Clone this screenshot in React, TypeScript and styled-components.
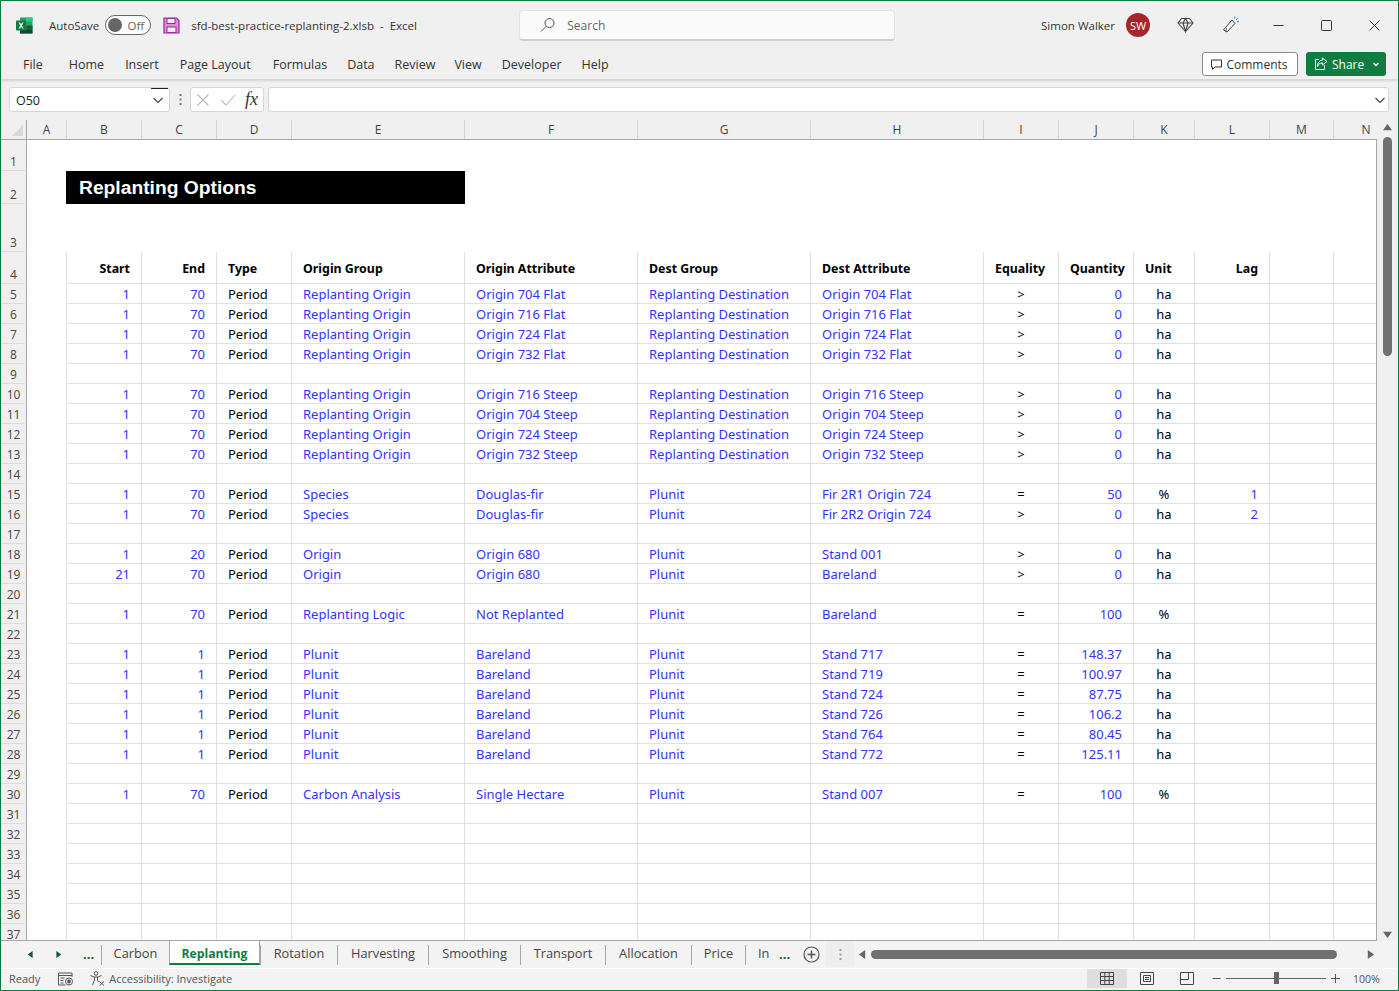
import React from "react";
import styled, { createGlobalStyle } from "styled-components";

const UI_FONT = `"Open Sans", "Noto Sans", sans-serif`;
const CELL_FONT = `"Noto Sans", "Open Sans", sans-serif`;

const GlobalStyle = createGlobalStyle`
    html, body {
        margin: 0;
        padding: 0;
        background: #fff;
    }
    * {
        box-sizing: border-box;
    }
`;

const Window = styled.div`
    width: 1399px;
    height: 991px;
    display: flex;
    flex-direction: column;
    overflow: hidden;
    border: 1px solid #107c41;
    background: #f0f0f0;
    font-family: ${UI_FONT};
    color: #333;
`;

const TitleBar = styled.div`
    height: 45px;
    flex: none;
    padding-top: 3px;
    display: flex;
    align-items: center;
    font-size: 11.5px;
`;

const AppLogo = styled.div`
    width: 48px;
    padding-left: 15px;
    display: flex;
`;

const Toggle = styled.div`
    width: 46px;
    height: 20px;
    margin: 0 12px 0 6px;
    padding: 0 6px 0 2px;
    display: flex;
    align-items: center;
    justify-content: space-between;
    border: 1px solid #666;
    border-radius: 10px;
    background: #fff;
    color: #666;
    font-size: 11.5px;
`;

const ToggleKnob = styled.span`
    width: 14px;
    height: 14px;
    border-radius: 50%;
    background: #666;
`;

const FileName = styled.span`
    width: 229px;
    margin-left: 11px;
    white-space: pre;
`;

const SearchBox = styled.div`
    width: 376px;
    height: 31px;
    margin-left: 99px;
    padding: 1px 0 0 19px;
    display: flex;
    align-items: center;
    gap: 11px;
    border: 1px solid #e4e4e4;
    border-bottom: 2px solid #cfcfcf;
    border-radius: 4px;
    background: #fafafa;
    color: #666;
    font-size: 12px;
`;

const UserArea = styled.div`
    margin-left: auto;
    display: flex;
    align-items: center;
`;

const Avatar = styled.div`
    width: 24px;
    height: 24px;
    margin: 0 25px 0 11px;
    display: flex;
    align-items: center;
    justify-content: center;
    border-radius: 50%;
    background: #a4262c;
    color: #fff;
    font-size: 11px;
`;

const IconSlot = styled.div<{ $w: number; $ml?: number }>`
    width: ${(p) => p.$w}px;
    margin-left: ${(p) => p.$ml ?? 0}px;
    display: flex;
    justify-content: center;
`;

const RibbonTabs = styled.div`
    height: 34px;
    flex: none;
    padding: 3px 12px 0 22px;
    display: flex;
    align-items: center;
    font-size: 12.5px;
    border-bottom: 1px solid #d8d8d8;
    box-shadow: 0 1px 2px rgba(0, 0, 0, 0.12);
    position: relative;
`;

const RibbonTab = styled.span<{ $gap: number }>`
    margin-right: ${(p) => p.$gap}px;
    padding-top: 1px;
    color: #333;
`;

const RibbonActions = styled.div`
    margin-left: auto;
    display: flex;
    gap: 8px;
    align-items: center;
    font-size: 12px;
`;

const CommentsButton = styled.div`
    width: 96px;
    height: 24px;
    padding-right: 2px;
    display: flex;
    align-items: center;
    justify-content: center;
    gap: 3px;
    border: 1px solid #8a8a8a;
    border-radius: 3px;
    background: #fff;
`;

const ShareButton = styled.div`
    width: 80px;
    height: 24px;
    padding: 0 4px 0 8px;
    display: flex;
    align-items: center;
    gap: 4px;
    border-radius: 3px;
    background: #107c41;
    color: #fff;
`;

const ShareCaret = styled.span`
    margin-left: auto;
    display: flex;
`;

const FormulaBar = styled.div`
    height: 40px;
    flex: none;
    padding: 7px 9px 8px 8px;
    display: flex;
    align-items: stretch;
`;

const InputBox = styled.div`
    display: flex;
    align-items: center;
    border: 1px solid #d6d6d6;
    border-radius: 3px;
    background: #fff;
`;

const NameBox = styled(InputBox)`
    width: 161px;
    padding: 1px 5px 0 6px;
    justify-content: space-between;
    font-size: 12.5px;
    color: #222;
    position: relative;
    &::after {
        content: "";
        position: absolute;
        top: 0;
        right: 1px;
        width: 17px;
        height: 1px;
        background: #222;
    }
`;

const BarDots = styled.div`
    width: 20px;
    display: flex;
    justify-content: center;
    align-items: center;
`;

const FormulaButtons = styled(InputBox)`
    width: 74px;
    margin-right: 4px;
    padding: 0 5px 0 5px;
    justify-content: space-between;
`;

const FxLabel = styled.span`
    font-family: "Liberation Serif", serif;
    font-style: italic;
    font-size: 18px;
    color: #333;
`;

const FormulaInput = styled(InputBox)`
    flex: 1;
    justify-content: flex-end;
    padding-right: 2px;
`;

const HeaderStrip = styled.div`
    height: 20px;
    flex: none;
    display: flex;
    background: #f0f0f0;
    font-size: 12px;
    color: #444;
    border-bottom: 1px solid #a6a6a6;
    margin-right: 21px;
`;

const Corner = styled.div`
    width: 26px;
    flex: none;
    display: flex;
    align-items: flex-end;
    justify-content: flex-end;
    padding: 0 3px 3px 0;
    border-right: 1px solid #a6a6a6;
`;

const ColumnLabel = styled.div<{ $w: number }>`
    width: ${(p) => p.$w}px;
    flex: none;
    display: flex;
    align-items: center;
    justify-content: center;
    border-right: 1px solid #d4d4d4;
    &:last-child {
        border-right: none;
    }
`;

const SheetArea = styled.div`
    flex: 1;
    min-height: 0;
    display: flex;
`;

const Grid = styled.div`
    flex: 1;
    overflow: hidden;
    background: #fff;
    border-right: 1px solid #a6a6a6;
    border-bottom: 1px solid #a6a6a6;
`;

const Row = styled.div<{ $h: number }>`
    height: ${(p) => p.$h}px;
    display: flex;
`;

const RowLabel = styled.div`
    width: 26px;
    flex: none;
    display: flex;
    align-items: flex-end;
    justify-content: center;
    background: #f0f0f0;
    border-right: 1px solid #a6a6a6;
    border-bottom: 1px solid #dcdcdc;
    color: #444;
    font-family: ${UI_FONT};
    font-size: 12px;
`;

const BlankA = styled.div<{ $line?: boolean }>`
    width: 40px;
    flex: none;
    border-right: ${(p) => (p.$line ? "1px solid #e0e0e0" : "none")};
`;

const Cell = styled.div<{ $w: number; $align: string; $blue?: boolean; $bold?: boolean }>`
    width: ${(p) => p.$w}px;
    flex: none;
    padding: ${(p) => (p.$bold ? "2px 11px 0" : "0 11px")};
    display: flex;
    align-items: center;
    justify-content: ${(p) => p.$align};
    border-right: 1px solid #e0e0e0;
    border-bottom: 1px solid #e0e0e0;
    color: ${(p) => (p.$blue ? "#3333ff" : "#000")};
    font-family: ${CELL_FONT};
    font-size: ${(p) => (p.$bold ? "12.4px" : "13px")};
    font-weight: ${(p) => (p.$bold ? 700 : 400)};
    white-space: nowrap;
    &:last-child {
        border-right: none;
    }
`;

const SheetTitle = styled.div`
    width: 399px;
    margin-left: -1px;
    padding: 0 0 0 13px;
    display: flex;
    align-items: center;
    background: #000;
    color: #fff;
    font-family: "Liberation Sans", Arial, sans-serif;
    font-size: 19.25px;
    font-weight: 700;
`;

const VScroll = styled.div`
    width: 21px;
    flex: none;
    display: flex;
    flex-direction: column;
    align-items: center;
    margin-top: -20px;
    padding: 3px 0 2px;
`;

const VThumb = styled.div`
    width: 9px;
    height: 219px;
    margin: 5px 0 auto;
    border-radius: 5px;
    background: #707070;
`;

const TabBar = styled.div`
    height: 28px;
    flex: none;
    display: flex;
    align-items: flex-start;
    background: #f3f3f3;
    font-size: 12.8px;
    border-bottom: 1px solid #fff;
`;

const TabNav = styled.div`
    width: 100px;
    height: 26px;
    flex: none;
    padding-left: 26px;
    display: flex;
    align-items: center;
    gap: 21px;
    color: #0e5c2f;
`;

const More = styled.span<{ $mx?: string }>`
    margin: ${(p) => p.$mx ?? "0"};
    font-weight: 700;
    font-size: 13px;
    color: #0e5c2f;
    line-height: 1;
`;

const Tab = styled.div<{ $w: number; $active?: boolean }>`
    width: ${(p) => p.$w}px;
    flex: none;
    height: ${(p) => (p.$active ? "24px" : "20px")};
    margin-top: ${(p) => (p.$active ? "0" : "4px")};
    padding: ${(p) => (p.$active ? "3px 0 0" : "0 0 4px")};
    display: flex;
    align-items: center;
    justify-content: center;
    overflow: hidden;
    white-space: nowrap;
    color: ${(p) => (p.$active ? "#107c41" : "#444")};
    font-size: ${(p) => (p.$active ? "12.2px" : "inherit")};
    font-weight: ${(p) => (p.$active ? 700 : 400)};
    background: ${(p) => (p.$active ? "#fff" : "transparent")};
    border-left: 1px solid #a6a6a6;
    border-right: ${(p) => (p.$active ? "1px solid #a6a6a6" : "none")};
    border-bottom: ${(p) => (p.$active ? "2px solid #107c41" : "none")};
`;

const ClippedTab = styled.div`
    width: 25px;
    height: 20px;
    margin-top: 4px;
    padding: 0 0 4px 12px;
    flex: none;
    display: flex;
    align-items: center;
    white-space: nowrap;
    border-left: 1px solid #a6a6a6;
    color: #444;
`;

const TabTools = styled.div`
    display: flex;
    align-items: center;
    height: 26px;
`;

const SplitHandle = styled.div`
    width: 28px;
    height: 100%;
    margin-left: 6px;
    display: flex;
    align-items: center;
    justify-content: center;
    background: #eeeeee;
`;

const HScroll = styled.div`
    height: 26px;
    flex: 1;
    display: flex;
    align-items: center;
    padding-left: 4px;
`;

const HThumb = styled.div`
    width: 466px;
    flex: none;
    height: 9px;
    margin: 0 29px 0 4px;
    border-radius: 5px;
    background: #707070;
`;

const StatusBar = styled.div`
    height: 21px;
    flex: none;
    display: flex;
    align-items: center;
    padding: 0 0 2px 8px;
    background: #f3f3f3;
    font-size: 11px;
    color: #555;
`;

const StatusIcon = styled.div<{ $ml: number }>`
    margin-left: ${(p) => p.$ml}px;
    margin-right: 4px;
    display: flex;
`;

const ViewGroup = styled.div`
    margin-left: auto;
    height: 100%;
    display: flex;
    align-items: center;
`;

const ViewButton = styled.div<{ $active?: boolean }>`
    width: 40px;
    height: 100%;
    display: flex;
    align-items: center;
    justify-content: center;
    background: ${(p) => (p.$active ? "#dedede" : "transparent")};
`;

const ZoomControl = styled.div`
    width: 128px;
    margin-left: 5px;
    display: flex;
    align-items: center;
    justify-content: space-between;
`;

const ZoomTrack = styled.div`
    width: 100px;
    height: 1px;
    background: #666;
    position: relative;
`;

const ZoomThumb = styled.div`
    position: absolute;
    left: 50%;
    top: -6px;
    width: 5px;
    height: 12px;
    margin-left: -2px;
    background: #666;
`;

const ZoomValue = styled.span`
    width: 58px;
    padding-left: 13px;
    font-size: 10.5px;
    white-space: nowrap;
`;

const COLUMNS = [
    ["B", 75], ["C", 75], ["D", 75], ["E", 173], ["F", 173], ["G", 173], ["H", 173],
    ["I", 75], ["J", 75], ["K", 61], ["L", 75], ["M", 64], ["N", 42],
] as const;

const ALIGN = ["flex-end", "flex-end", "flex-start", "flex-start", "flex-start", "flex-start", "flex-start", "center", "flex-end", "center", "flex-end", "flex-start", "flex-start"];
const BLACK_COLS = [2, 7, 9];

const HEADINGS = ["Start", "End", "Type", "Origin Group", "Origin Attribute", "Dest Group", "Dest Attribute", "Equality", "Quantity", "Unit", "Lag", "", ""];
const HEAD_ALIGN = ["flex-end", "flex-end", "flex-start", "flex-start", "flex-start", "flex-start", "flex-start", "flex-start", "flex-start", "flex-start", "flex-end", "flex-start", "flex-start"];

const RD = "Replanting Destination";
const RO = "Replanting Origin";

const r = (s: number, e: number, og: string, oa: string, dg: string, da: string, eq: string, q: string, u: string, lag = ""): string[] =>
    [String(s), String(e), "Period", og, oa, dg, da, eq, q, u, lag, "", ""];

const DATA: Record<number, string[]> = {
    5: r(1, 70, RO, "Origin 704 Flat", RD, "Origin 704 Flat", ">", "0", "ha"),
    6: r(1, 70, RO, "Origin 716 Flat", RD, "Origin 716 Flat", ">", "0", "ha"),
    7: r(1, 70, RO, "Origin 724 Flat", RD, "Origin 724 Flat", ">", "0", "ha"),
    8: r(1, 70, RO, "Origin 732 Flat", RD, "Origin 732 Flat", ">", "0", "ha"),
    10: r(1, 70, RO, "Origin 716 Steep", RD, "Origin 716 Steep", ">", "0", "ha"),
    11: r(1, 70, RO, "Origin 704 Steep", RD, "Origin 704 Steep", ">", "0", "ha"),
    12: r(1, 70, RO, "Origin 724 Steep", RD, "Origin 724 Steep", ">", "0", "ha"),
    13: r(1, 70, RO, "Origin 732 Steep", RD, "Origin 732 Steep", ">", "0", "ha"),
    15: r(1, 70, "Species", "Douglas-fir", "Plunit", "Fir 2R1 Origin 724", "=", "50", "%", "1"),
    16: r(1, 70, "Species", "Douglas-fir", "Plunit", "Fir 2R2 Origin 724", ">", "0", "ha", "2"),
    18: r(1, 20, "Origin", "Origin 680", "Plunit", "Stand 001", ">", "0", "ha"),
    19: r(21, 70, "Origin", "Origin 680", "Plunit", "Bareland", ">", "0", "ha"),
    21: r(1, 70, "Replanting Logic", "Not Replanted", "Plunit", "Bareland", "=", "100", "%"),
    23: r(1, 1, "Plunit", "Bareland", "Plunit", "Stand 717", "=", "148.37", "ha"),
    24: r(1, 1, "Plunit", "Bareland", "Plunit", "Stand 719", "=", "100.97", "ha"),
    25: r(1, 1, "Plunit", "Bareland", "Plunit", "Stand 724", "=", "87.75", "ha"),
    26: r(1, 1, "Plunit", "Bareland", "Plunit", "Stand 726", "=", "106.2", "ha"),
    27: r(1, 1, "Plunit", "Bareland", "Plunit", "Stand 764", "=", "80.45", "ha"),
    28: r(1, 1, "Plunit", "Bareland", "Plunit", "Stand 772", "=", "125.11", "ha"),
    30: r(1, 70, "Carbon Analysis", "Single Hectare", "Plunit", "Stand 007", "=", "100", "%"),
};

const ROW_NUMBERS = Array.from({ length: 33 }, (_, i) => i + 5);

const TABS = [
    ["Carbon", 68], ["Replanting", 91], ["Rotation", 77], ["Harvesting", 91], ["Smoothing", 92],
    ["Transport", 85], ["Allocation", 86], ["Price", 54],
] as const;

const Chevron = ({ color = "#444" }: { color?: string }) => (
    <svg width="12" height="12" viewBox="0 0 12 12" fill="none" stroke={color} strokeWidth="1.1">
        <path d="M1.500 4l4.500 4.500L10.500 4" />
    </svg>
);

const SmallCaret = () => (
    <svg width="12" height="12" viewBox="0 0 12 12" fill="none" stroke="#fff" strokeWidth="1.400">
        <path d="M3.500 5l2.500 2.500L8.500 5" />
    </svg>
);

const ExcelLogo = () => (
    <svg width="17" height="17" viewBox="0 0 17 17">
        <rect x="4" y="0.500" width="12.500" height="16" rx="1" fill="#21a366" />
        <rect x="10" y="0.500" width="6.500" height="4" fill="#33c481" />
        <rect x="4" y="8.500" width="6.500" height="4" fill="#107c41" />
        <rect x="10.500" y="8.500" width="6" height="4" fill="#185c37" />
        <rect x="4" y="12.500" width="12.500" height="4" fill="#0b4a2a" />
        <rect x="0" y="3.500" width="10" height="10" rx="1" fill="#107c41" />
        <path d="M2.600 5.600h1.500l1 1.800 1-1.800h1.400L5.900 8.500l1.700 2.900H6.100L5.100 9.500l-1 1.900H2.600l1.700-2.900z" fill="#fff" />
    </svg>
);

const SaveIcon = () => (
    <svg width="17" height="17" viewBox="0 0 17 17">
        <path d="M1 1h12.500L16 3.500V16H1z" fill="#d98fd9" stroke="#9b2a9b" strokeWidth="1.200" />
        <rect x="4" y="1.500" width="8" height="5" fill="#f6eaf6" stroke="#9b2a9b" />
        <rect x="4" y="10" width="9" height="5.500" fill="#f6eaf6" stroke="#9b2a9b" />
    </svg>
);

const SearchIcon = () => (
    <svg width="17" height="17" viewBox="0 0 17 17" fill="none" stroke="#555" strokeWidth="1">
        <circle cx="10.500" cy="6" r="4.500" />
        <path d="M7 9.500L2 14.500" />
    </svg>
);

const GemIcon = () => (
    <svg width="17" height="16" viewBox="0 0 17 16" fill="none" stroke="#444" strokeWidth="1.100">
        <path d="M4.500 1.500h8l3.500 4.500-7.500 8.500L1 6z" />
        <path d="M1 6h15M6 6l2.500 8.500L11 6 8.500 1.500 6 6z" />
    </svg>
);

const CoauthorIcon = () => (
    <svg width="18" height="18" viewBox="0 0 18 18" fill="none" stroke="#444" strokeWidth="1">
        <path d="M1.500 14l8.500-10 3 3.500L5 16z" />
        <path d="M3 15.500c1-.5 1.500-1.500 1.500-3" />
        <path d="M14 4l2-2M12.500 2.500l.5-2M15 6l2-.5" stroke="#2b88d8" />
    </svg>
);

const MinimizeIcon = () => (
    <svg width="11" height="11" viewBox="0 0 11 11" stroke="#333"><path d="M0.500 5.500h10" /></svg>
);

const MaximizeIcon = () => (
    <svg width="11" height="11" viewBox="0 0 11 11" fill="none" stroke="#333">
        <rect x="0.500" y="0.500" width="10" height="10" rx="1" />
    </svg>
);

const CloseIcon = () => (
    <svg width="11" height="11" viewBox="0 0 11 11" stroke="#333"><path d="M0.500 0.500l10 10M10.500 0.500l-10 10" /></svg>
);

const CommentIcon = () => (
    <svg width="13" height="13" viewBox="0 0 13 13" fill="none" stroke="#333" strokeWidth="1">
        <path d="M1.500 2h10v7H5l-2.500 2.500V9h-1z" />
    </svg>
);

const ShareIcon = () => (
    <svg width="14" height="14" viewBox="0 0 14 14" fill="none" stroke="#fff" strokeWidth="1">
        <path d="M5 2.500H1.500v10h9V8" />
        <path d="M8.500 1l4.500 3.500L8.500 8V6C6 6 4.500 7 3.500 9.500 3.500 6 5.500 3.200 8.500 3z" />
    </svg>
);

const CrossIcon = () => (
    <svg width="14" height="14" viewBox="0 0 14 14" stroke="#b8b8b8" strokeWidth="1.100">
        <path d="M1.500 1.500l11 11M12.500 1.500l-11 11" />
    </svg>
);

const CheckIcon = () => (
    <svg width="16" height="14" viewBox="0 0 16 14" fill="none" stroke="#b8b8b8" strokeWidth="1.100">
        <path d="M1 7l5 5L15 2" />
    </svg>
);

const VDots = ({ color = "#666" }: { color?: string }) => (
    <svg width="3" height="11" viewBox="0 0 3 11" fill={color}>
        <rect x="0.500" y="0" width="2" height="2" />
        <rect x="0.500" y="4.500" width="2" height="2" />
        <rect x="0.500" y="9" width="2" height="2" />
    </svg>
);

const Triangle = ({ dir, color = "#666", size = 9 }: { dir: "up" | "down" | "left" | "right"; color?: string; size?: number }) => {
    const points = {
        up: "5,1 10,8 0,8",
        down: "0,2 10,2 5,9",
        left: "8,0 8,10 1,5",
        right: "2,0 2,10 9,5",
    }[dir];
    return (
        <svg width={size} height={size} viewBox="0 0 10 10" fill={color}>
            <polygon points={points} />
        </svg>
    );
};

const CornerMark = () => (
    <svg width="11" height="11" viewBox="0 0 11 11">
        <polygon points="11,0 11,11 0,11" fill="#d8d8d8" />
    </svg>
);

const PlusCircle = () => (
    <svg width="17" height="17" viewBox="0 0 17 17" fill="none" stroke="#555">
        <circle cx="8.500" cy="8.500" r="7.500" strokeWidth="1.200" />
        <path d="M8.500 4.500v8M4.500 8.500h8" strokeWidth="1.500" />
    </svg>
);

const MacroIcon = () => (
    <svg width="15" height="14" viewBox="0 0 15 14" fill="none" stroke="#555" strokeWidth="1">
        <path d="M0.500 1h13.500v4M0.500 1v12h7M0.500 3.500h13.500M2.500 6h4M2.500 8.500h3M2.500 11h3" />
        <circle cx="11" cy="9.500" r="3.500" />
        <circle cx="11" cy="9.500" r="1.500" fill="#555" />
    </svg>
);

const AccessIcon = () => (
    <svg width="15" height="15" viewBox="0 0 15 15" fill="none" stroke="#555" strokeWidth="1">
        <circle cx="6" cy="2.500" r="1.800" />
        <path d="M0.500 4.500l3.500 1.500h4l3.500-1.500M4.500 6v3L2.500 14M7.500 6v3l1 2" />
        <path d="M9.500 10.500l4.500 4M14 10.500l-4.500 4" />
    </svg>
);

const NormalViewIcon = () => (
    <svg width="14" height="13" viewBox="0 0 14 13" fill="none" stroke="#444">
        <path d="M0.500 0.500h13v12h-13zM0.500 4.500h13M0.500 8.500h13M4.800 0.500v12M9.200 0.500v12" />
    </svg>
);

const PageViewIcon = () => (
    <svg width="14" height="13" viewBox="0 0 14 13" fill="none" stroke="#444">
        <path d="M0.500 0.500h13v12h-13zM3.500 3.500h7v6h-7zM5 5.500h4M5 7.500h4" />
    </svg>
);

const BreakViewIcon = () => (
    <svg width="14" height="13" viewBox="0 0 14 13" fill="none" stroke="#444">
        <path d="M0.500 0.500h13v12h-13zM0.500 7.500h8v-7" />
    </svg>
);

const ZoomMinus = () => (
    <svg width="9" height="9" viewBox="0 0 9 9" stroke="#555"><path d="M0.500 4.500h8" /></svg>
);

const ZoomPlus = () => (
    <svg width="9" height="9" viewBox="0 0 9 9" stroke="#555"><path d="M0 4.500h9M4.500 0v9" /></svg>
);

const SheetRow = ({ n }: { n: number }) => {
    const values = DATA[n];
    return (
        <Row $h={20}>
            <RowLabel>{n}</RowLabel>
            <BlankA $line />
            {COLUMNS.map(([letter, width], i) => (
                <Cell key={letter} $w={width} $align={ALIGN[i]} $blue={!BLACK_COLS.includes(i)}>
                    {values ? values[i] : ""}
                </Cell>
            ))}
        </Row>
    );
};

const App: React.FC = () => (
    <>
        <GlobalStyle />
        <Window>
            <TitleBar>
                <AppLogo><ExcelLogo /></AppLogo>
                <span>AutoSave</span>
                <Toggle><ToggleKnob />Off</Toggle>
                <SaveIcon />
                <FileName>sfd-best-practice-replanting-2.xlsb  -  Excel</FileName>
                <SearchBox><SearchIcon />Search</SearchBox>
                <UserArea>
                    Simon Walker
                    <Avatar>SW</Avatar>
                    <IconSlot $w={20}><GemIcon /></IconSlot>
                    <IconSlot $w={26} $ml={23}><CoauthorIcon /></IconSlot>
                    <IconSlot $w={48} $ml={10}><MinimizeIcon /></IconSlot>
                    <IconSlot $w={48}><MaximizeIcon /></IconSlot>
                    <IconSlot $w={48}><CloseIcon /></IconSlot>
                </UserArea>
            </TitleBar>
            <RibbonTabs>
                <RibbonTab $gap={26}>File</RibbonTab>
                <RibbonTab $gap={21}>Home</RibbonTab>
                <RibbonTab $gap={21}>Insert</RibbonTab>
                <RibbonTab $gap={22}>Page Layout</RibbonTab>
                <RibbonTab $gap={20}>Formulas</RibbonTab>
                <RibbonTab $gap={20}>Data</RibbonTab>
                <RibbonTab $gap={19}>Review</RibbonTab>
                <RibbonTab $gap={20}>View</RibbonTab>
                <RibbonTab $gap={20}>Developer</RibbonTab>
                <RibbonTab $gap={0}>Help</RibbonTab>
                <RibbonActions>
                    <CommentsButton><CommentIcon />Comments</CommentsButton>
                    <ShareButton><ShareIcon />Share<ShareCaret><SmallCaret /></ShareCaret></ShareButton>
                </RibbonActions>
            </RibbonTabs>
            <FormulaBar>
                <NameBox>O50<Chevron /></NameBox>
                <BarDots><VDots color="#777" /></BarDots>
                <FormulaButtons><CrossIcon /><CheckIcon /><FxLabel>fx</FxLabel></FormulaButtons>
                <FormulaInput><Chevron /></FormulaInput>
            </FormulaBar>
            <HeaderStrip>
                <Corner><CornerMark /></Corner>
                <ColumnLabel $w={40}>A</ColumnLabel>
                {COLUMNS.map(([letter, width]) => (
                    <ColumnLabel key={letter} $w={letter === "N" ? 64 : width}>{letter}</ColumnLabel>
                ))}
            </HeaderStrip>
            <SheetArea>
                <Grid>
                    <Row $h={31}><RowLabel>1</RowLabel></Row>
                    <Row $h={33}>
                        <RowLabel>2</RowLabel>
                        <BlankA />
                        <SheetTitle>Replanting Options</SheetTitle>
                    </Row>
                    <Row $h={48}><RowLabel>3</RowLabel></Row>
                    <Row $h={32}>
                        <RowLabel>4</RowLabel>
                        <BlankA $line />
                        {COLUMNS.map(([letter, width], i) => (
                            <Cell key={letter} $w={width} $align={HEAD_ALIGN[i]} $bold>{HEADINGS[i]}</Cell>
                        ))}
                    </Row>
                    {ROW_NUMBERS.map((n) => <SheetRow key={n} n={n} />)}
                </Grid>
                <VScroll>
                    <Triangle dir="up" />
                    <VThumb />
                    <Triangle dir="down" />
                </VScroll>
            </SheetArea>
            <TabBar>
                <TabNav>
                    <Triangle dir="left" color="#0e5c2f" size={7} />
                    <Triangle dir="right" color="#0e5c2f" size={7} />
                    <More>...</More>
                </TabNav>
                {TABS.map(([name, width]) => (
                    <Tab key={name} $w={width} $active={name === "Replanting"}>{name}</Tab>
                ))}
                <ClippedTab>In</ClippedTab>
                <TabTools>
                    <More $mx="0 13px 0 9px">...</More>
                    <PlusCircle />
                    <SplitHandle><VDots color="#999" /></SplitHandle>
                </TabTools>
                <HScroll>
                    <Triangle dir="left" />
                    <HThumb />
                    <Triangle dir="right" />
                </HScroll>
            </TabBar>
            <StatusBar>
                Ready
                <StatusIcon $ml={18}><MacroIcon /></StatusIcon>
                <StatusIcon $ml={13}><AccessIcon /></StatusIcon>
                Accessibility: Investigate
                <ViewGroup>
                    <ViewButton $active><NormalViewIcon /></ViewButton>
                    <ViewButton><PageViewIcon /></ViewButton>
                    <ViewButton><BreakViewIcon /></ViewButton>
                    <ZoomControl>
                        <ZoomMinus />
                        <ZoomTrack><ZoomThumb /></ZoomTrack>
                        <ZoomPlus />
                    </ZoomControl>
                    <ZoomValue>100%</ZoomValue>
                </ViewGroup>
            </StatusBar>
        </Window>
    </>
);

export default App;
